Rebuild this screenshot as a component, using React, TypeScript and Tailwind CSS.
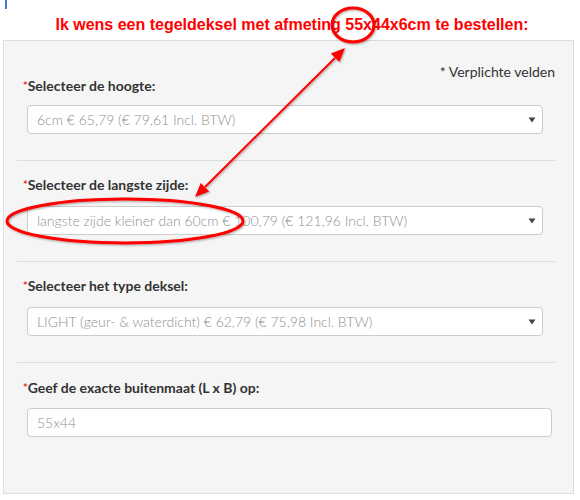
import React from "react";

const Caret = () => (
  <svg width="8" height="6" viewBox="0 0 8 6" className="shrink-0">
    <path d="M0.5 0.5 H7.5 L4 5.5 Z" fill="#444" />
  </svg>
);

const Label = ({ children }: { children: React.ReactNode }) => (
  <div className="pl-[6px] text-[14px] leading-[14px] font-bold text-[#333]">
    <span className="text-[#e0312c] text-[11px] align-top">*</span>
    {children}
  </div>
);

const FakeSelect = ({ value, className }: { value: string; className?: string }) => (
  <div
    className={
      "ml-[10px] w-[516px] h-[29px] bg-white border border-[#ccc] rounded-[4px] flex items-center justify-between pl-[9px] pr-[6px] " +
      (className ?? "")
    }
  >
    <span className="text-[14px] font-light text-[#8f8f8f] truncate">{value}</span>
    <Caret />
  </div>
);

export default function App() {
  return (
    <div
      className="relative w-[580px] h-[500px] bg-white overflow-hidden"
      style={{ fontFamily: "Lato, 'Open Sans', sans-serif" }}
    >
      <div className="ml-[5px] w-[2px] h-[9px] bg-[#3f7be0]"></div>

      <h1
        className="mt-[6px] text-center text-[16px] leading-[20px] font-bold text-[#ff0000] pl-[4px]"
        style={{ fontFamily: "'Liberation Sans', Arial, sans-serif" }}
      >
        Ik wens een tegeldeksel met afmeting 55x44x6cm te bestellen:
      </h1>

      {/* Form panel */}
      <div className="mt-[5px] ml-[3px] w-[571px] h-[454px] bg-[#f5f5f5] border border-[#dddddd] pl-[13px] pr-[17px]">
        <div className="pt-[24px] pr-[1px] text-right text-[14px] leading-[14px] text-[#333]">
          * Verplichte velden
        </div>

        <div className="border-b border-[#dddddd] pb-[26px]">
          <Label>Selecteer de hoogte:</Label>
          <FakeSelect className="mt-[12px]" value="6cm € 65,79 (€ 79,61 Incl. BTW)" />
        </div>

        <div className="border-b border-[#dddddd] pt-[17px] pb-[26px]">
          <Label>Selecteer de langste zijde:</Label>
          <FakeSelect
            className="mt-[14px]"
            value="langste zijde kleiner dan 60cm € 100,79 (€ 121,96 Incl. BTW)"
          />
        </div>

        <div className="border-b border-[#dddddd] pt-[17px] pb-[26px]">
          <Label>Selecteer het type deksel:</Label>
          <FakeSelect
            className="mt-[14px]"
            value="LIGHT (geur- & waterdicht) € 62,79 (€ 75,98 Incl. BTW)"
          />
        </div>

        <div className="pt-[18px]">
          <Label>Geef de exacte buitenmaat (L x B) op:</Label>
          <div className="mt-[13px] ml-[10px] w-[525px] h-[29px] bg-white border border-[#ccc] rounded-[4px] flex items-center pl-[9px]">
            <span className="text-[14px] font-light text-[#8f8f8f]">55x44</span>
          </div>
        </div>
      </div>

      {/* Red annotations drawn over the screenshot */}
      <svg
        className="absolute inset-0 pointer-events-none"
        width="580"
        height="500"
        viewBox="0 0 580 500"
      >
        <defs>
          <filter id="sh" x="-20%" y="-20%" width="140%" height="140%">
            <feDropShadow dx="1" dy="1" stdDeviation="1" floodColor="#000" floodOpacity="0.35" />
          </filter>
        </defs>
        <g filter="url(#sh)" stroke="#ff0000" fill="none">
          <ellipse cx="353" cy="25" rx="21" ry="17" strokeWidth="3" />
          <ellipse cx="125" cy="221" rx="118" ry="22" strokeWidth="3" />
          <line x1="335" y1="58" x2="205" y2="187" strokeWidth="2" />
        </g>
        <g filter="url(#sh)" fill="#ff0000">
          <polygon points="345,48 339.3,62.1 330.8,53.6" />
          <polygon points="195,197 209.2,191.4 200.7,182.9" />
        </g>
      </svg>
    </div>
  );
}
